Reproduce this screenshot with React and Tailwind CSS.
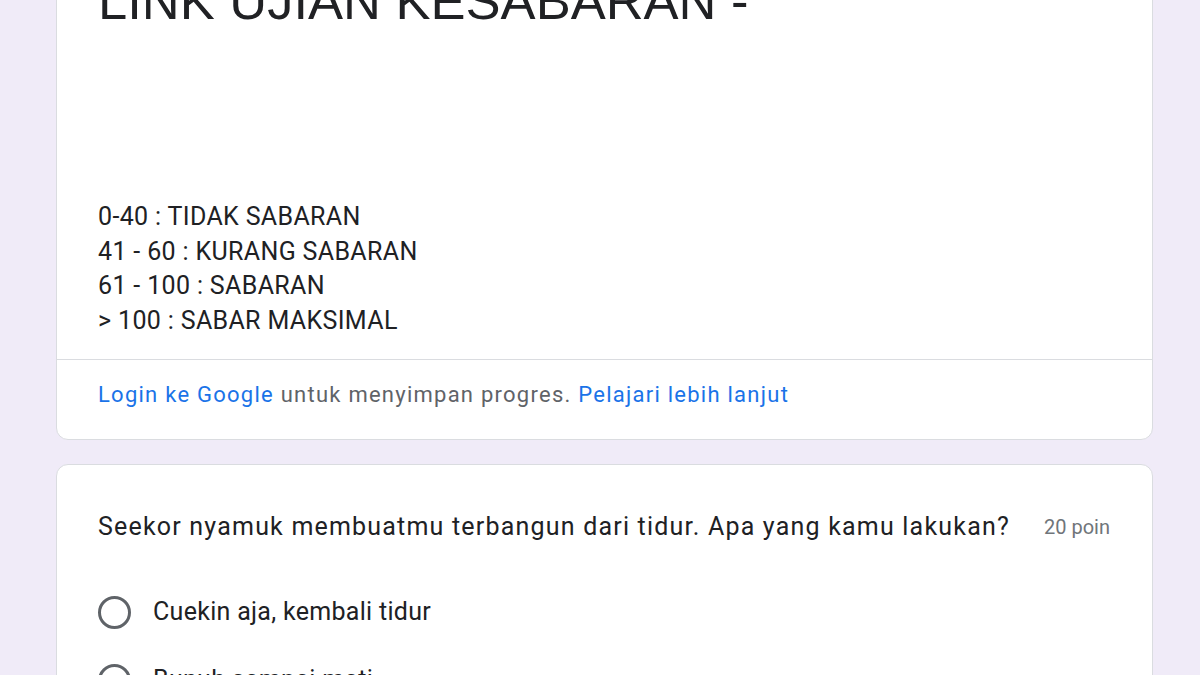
import { useState } from "react"

const options = ["Cuekin aja, kembali tidur", "Bunuh sampai mati", "Pasang obat nyamuk"]

function Radio({ label, checked, onClick }) {
  return (
    <button onClick={onClick} className="flex items-center gap-[22px] text-left">
      <span className="w-[33px] h-[33px] rounded-full border-[3px] border-[#5f6368] flex items-center justify-center shrink-0">
        {checked && <span className="w-[15px] h-[15px] rounded-full bg-[#673ab7]" />}
      </span>
      <span className="text-[25px] leading-[34px] tracking-[0.3px] text-[#202124]">{label}</span>
    </button>
  )
}

export default function App() {
  const [pilih, setPilih] = useState(null)

  return (
    <div className="h-[675px] overflow-hidden bg-[#f0ebf8] font-['Roboto',sans-serif]">
      <div className="ml-[56px] w-[1097px] flex flex-col gap-[24px]">

        {/* Kartu judul */}
        <div className="-mt-[40px] bg-white border border-[#dadce0] rounded-[12px]">
          <div className="px-[41px] pt-[14px] pb-[21px]">
            <h1 className="font-['Liberation_Sans',Arial,sans-serif] text-[52.5px] leading-[52px] text-[#202124]">
              LINK UJIAN KESABARAN -
            </h1>
            <div className="mt-[173px] text-[25px] leading-[34.5px] tracking-[0.35px] text-[#202124]">
              <p>0-40 : TIDAK SABARAN</p>
              <p>41 - 60 : KURANG SABARAN</p>
              <p>61 - 100 : SABARAN</p>
              <p>&gt; 100 : SABAR MAKSIMAL</p>
            </div>
          </div>
          <div className="border-t border-[#dadce0] px-[41px] pt-[22px] h-[80px] text-[22px] leading-[26px] tracking-[1.25px] text-[#5f6368]">
            <p>
              <span className="text-[#1a73e8]">Login ke Google</span> untuk menyimpan progres.{" "}
              <span className="text-[#1a73e8]">Pelajari lebih lanjut</span>
            </p>
          </div>
        </div>

        {/* Kartu pertanyaan */}
        <div className="bg-white border border-[#dadce0] rounded-[12px] px-[41px] pt-[45px] pb-[30px]">
          <div className="flex items-start justify-between">
            <p className="text-[25px] leading-[34px] tracking-[1.2px] text-[#202124]">
              Seekor nyamuk membuatmu terbangun dari tidur. Apa yang kamu lakukan?
            </p>
            <span className="text-[20px] leading-[34px] text-[#70757a] pr-[1px]">20 poin</span>
          </div>
          <div className="mt-[51px] flex flex-col gap-[34px]">
            {options.map((o, i) => (
              <Radio key={o} label={o} checked={pilih === i} onClick={() => setPilih(i)} />
            ))}
          </div>
        </div>

      </div>
    </div>
  )
}
